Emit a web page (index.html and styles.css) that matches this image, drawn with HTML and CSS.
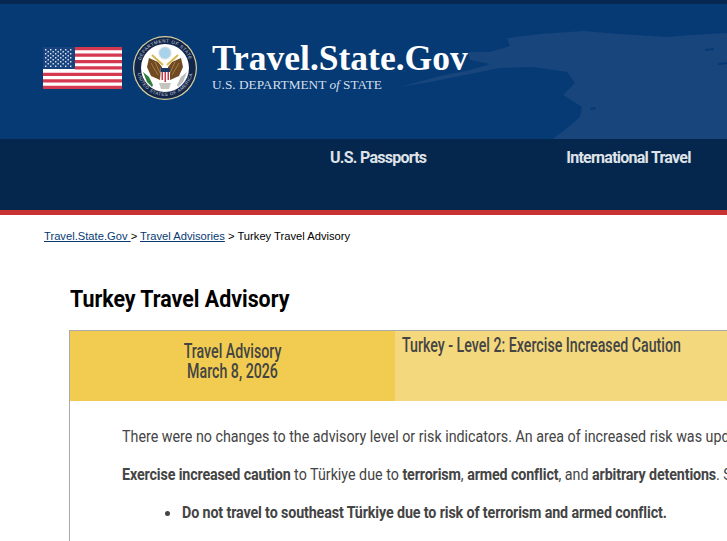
FILE: index.html
```html
<!DOCTYPE html>
<html lang="en">
<head>
    <meta charset="UTF-8">
    <title>Turkey Travel Advisory</title>
    <meta name="viewport" content="width=device-width, initial-scale=1.0">
    <link rel="stylesheet" href="styles.css">
</head>
<body>

<header class="site-header">
    <div class="brand-band">
        <svg class="map-shape" viewBox="427 4 300 135" aria-hidden="true">
            <path d="M507 38 L540 34 L583 31 L620 34 L667 37 L690 35 L727 33 L727 139 L553 139 L567 128 L580 117 L582 107 L563 95 L575 83 L567 72 L533 67 L500 68 L470 74 L430 82 L400 87 L440 76 L470 70 L490 64 L470 60 L468 52 L490 52 L510 46 Z" fill="#17457c"/>
            <path d="M590 108 l5 -1 l1 2 l-5 1 Z M705 49 l9 -1 l0 2 l-9 1 Z M718 63 l9 -1 l0 2 l-9 1 Z" fill="#053a74"/>
        </svg>
        <svg class="flag" viewBox="0 0 79 42" aria-label="U.S. flag">
            <rect width="79" height="42" fill="#fff"/>
            <path d="M32 0h47v3.200H32zM32 6.500h47v3.200H32zM32 13h47v3.200H32zM32 19.300h47v3.200H32zM0 25.800h79v3.200H0zM0 32.300h79v3.200H0zM0 38.800h79V42H0z" fill="#d5394f"/>
            <rect width="32" height="22" fill="#18437e"/>
            <g fill="#dfe6f1">
                <path d="M2 2h1.400v1.400H2zM7 2h1.400v1.400H7zM12 2h1.400v1.400H12zM17 2h1.400v1.400H17zM22 2h1.400v1.400H22zM27 2h1.400v1.400H27z"/>
                <path d="M2 6h1.400v1.400H2zM7 6h1.400v1.400H7zM12 6h1.400v1.400H12zM17 6h1.400v1.400H17zM22 6h1.400v1.400H22zM27 6h1.400v1.400H27z"/>
                <path d="M4.500 4h1.400v1.400H4.500zM9.500 4h1.400v1.400H9.500zM14.500 4h1.400v1.400H14.500zM19.500 4h1.400v1.400H19.500zM24.500 4h1.400v1.400H24.500z"/>
                <path d="M4.500 8h1.400v1.400H4.500zM9.500 8h1.400v1.400H9.500zM14.500 8h1.400v1.400H14.500zM19.500 8h1.400v1.400H19.500zM24.500 8h1.400v1.400H24.500z"/>
                <path d="M2 10h1.400v1.400H2zM7 10h1.400v1.400H7zM12 10h1.400v1.400H12zM17 10h1.400v1.400H17zM22 10h1.400v1.400H22zM27 10h1.400v1.400H27z"/>
                <path d="M4.500 12h1.400v1.400H4.500zM9.500 12h1.400v1.400H9.500zM14.500 12h1.400v1.400H14.500zM19.500 12h1.400v1.400H19.500zM24.500 12h1.400v1.400H24.500z"/>
                <path d="M2 14h1.400v1.400H2zM7 14h1.400v1.400H7zM12 14h1.400v1.400H12zM17 14h1.400v1.400H17zM22 14h1.400v1.400H22zM27 14h1.400v1.400H27z"/>
                <path d="M4.500 16h1.400v1.400H4.500zM9.500 16h1.400v1.400H9.500zM14.500 16h1.400v1.400H14.500zM19.500 16h1.400v1.400H19.500zM24.500 16h1.400v1.400H24.500z"/>
                <path d="M2 18.500h1.400v1.400H2zM7 18.500h1.400v1.400H7zM12 18.500h1.400v1.400H12zM17 18.500h1.400v1.400H17zM22 18.500h1.400v1.400H22zM27 18.500h1.400v1.400H27z"/>
            </g>
        </svg>
        <svg class="seal" viewBox="0 0 64 64" aria-label="Department of State seal">
            <defs>
                <path id="seal-top" d="M6.500 32 A25.500 25.500 0 0 1 57.500 32"/>
                <path id="seal-bottom" d="M4 32 A28 28 0 0 0 60 32"/>
            </defs>
            <circle cx="32" cy="32" r="32" fill="#d8cf9c"/>
            <circle cx="32" cy="32" r="30.800" fill="#12264a"/>
            <text class="seal-ring"><textPath href="#seal-top" startOffset="50%" text-anchor="middle">DEPARTMENT OF STATE</textPath></text>
            <text class="seal-ring"><textPath href="#seal-bottom" startOffset="50%" text-anchor="middle">UNITED STATES OF AMERICA</textPath></text>
            <circle cx="32" cy="32" r="24" fill="#fff"/>
            <circle cx="32" cy="17" r="6" fill="#a9d3ea" stroke="#d8dde0" stroke-width="1.500" stroke-dasharray="1.500 .8"/>
            <path d="M29 31 L25 26 L16 22 L14 31 L18 40 L27 44 Z" fill="#6f4a22"/>
            <path d="M35 31 L39 26 L48 22 L50 31 L46 40 L37 44 Z" fill="#6f4a22"/>
            <path d="M18 27 L25 39 M22 26 L27 37 M46 27 L39 39 M42 26 L37 37" stroke="#a67c46" stroke-width="1"/>
            <path d="M19 19 L30 29 M45 19 L34 29" stroke="#d7b64a" stroke-width="1.800"/>
            <path d="M27.500 32 h9.500 v10 q0 3 -4.750 5 q-4.750 -2 -4.750 -5 Z" fill="#fff"/>
            <path d="M27.500 32 h9.500 v4 h-9.500 Z" fill="#1d3763"/>
            <path d="M28.500 36 h1.500 v8 h-1.500 Z M31.500 36 h1.500 v10 h-1.500 Z M34.500 36 h1.500 v8 h-1.500 Z" fill="#c8384a"/>
            <path d="M10 36 l6 5 l4 8 l-1 2 l-5 -5 Z" fill="#2f7d3d"/>
            <path d="M54 36 l-6 5 l-4 8 l1 2 l5 -5 Z" fill="#b9bcbc"/>
            <path d="M26 47 h12 l-2 6 h-8 Z" fill="#c5c5bf"/>
        </svg>
        <div class="brand-text">
            <div class="brand-title">Travel.State.Gov</div>
            <div class="brand-sub">U.S. DEPARTMENT <i>of</i> STATE</div>
        </div>
    </div>
    <nav class="main-nav">
        <a href="#">U.S. Passports</a>
        <a href="#">International Travel</a>
    </nav>
</header>

<div class="breadcrumb">
    <a href="#">Travel.State.Gov </a> &gt; <a href="#">Travel Advisories</a> &gt; <span class="current">Turkey Travel Advisory</span>
</div>

<main class="content">
    <h1><span>Turkey Travel Advisory</span></h1>

    <section class="advisory">
        <div class="advisory-head">
            <div class="advisory-date">
                <span class="squeeze">Travel Advisory</span>
                <span class="squeeze">March 8, 2026</span>
            </div>
            <div class="advisory-level">
                <span class="squeeze">Turkey - Level 2: Exercise Increased Caution</span>
            </div>
        </div>
        <div class="advisory-body">
            <p>There were no changes to the advisory level or risk indicators. An area of increased risk was updated to reflect the current security situation in the country.</p>
            <p><strong>Exercise increased caution</strong> to Türkiye due to <strong>terrorism</strong>, <strong>armed conflict</strong>, and <strong>arbitrary detentions</strong>. Some areas have increased risk.</p>
            <ul>
                <li><span class="item-text"><strong>Do not travel to southeast Türkiye due to risk of terrorism and armed conflict.</strong></span></li>
            </ul>
        </div>
    </section>
</main>

</body>
</html>
```

FILE: styles.css
```css
html, body {
    margin: 0;
    padding: 0;
    height: 541px;
    overflow: hidden;
}

body {
    background: #fff;
    font-family: Roboto, "Liberation Sans", sans-serif;
    color: #333;
}

.site-header {
    border-top: 4px solid #06274f;
    border-bottom: 5px solid #c93232;
}

.brand-band {
    position: relative;
    display: flex;
    align-items: flex-start;
    height: 135px;
    padding-left: 43px;
    box-sizing: border-box;
    background: #053a74;
    overflow: hidden;
}

.map-shape {
    position: absolute;
    right: 0;
    top: 0;
    width: 300px;
    height: 135px;
    overflow: visible;
}

.flag {
    position: relative;
    flex: none;
    width: 79px;
    height: 42px;
    margin-top: 43px;
}

.seal {
    position: relative;
    flex: none;
    width: 64px;
    height: 64px;
    margin-left: 11px;
    margin-top: 32px;
}

.seal-ring {
    font-family: "Liberation Sans", sans-serif;
    font-size: 4.6px;
    letter-spacing: 0.5px;
    fill: #c6ccd8;
}

.brand-text {
    position: relative;
    margin-left: 15px;
    margin-top: 35px;
    color: #fff;
    font-family: "Liberation Serif", serif;
}

.brand-title {
    font-size: 35.5px;
    font-weight: bold;
    line-height: 38px;
    white-space: nowrap;
}

.brand-sub {
    font-size: 13.3px;
    line-height: 16px;
    color: #d5deea;
    white-space: nowrap;
}

.main-nav {
    display: flex;
    gap: 140px;
    height: 71px;
    padding: 9px 0 0 330px;
    box-sizing: border-box;
    background: #06274d;
}

.main-nav a {
    color: #dfe3e8;
    font-size: 16px;
    font-weight: bold;
    line-height: 20px;
    letter-spacing: -0.75px;
    text-decoration: none;
    white-space: nowrap;
}

.breadcrumb {
    padding: 14px 0 0 44px;
    font-family: "Liberation Sans", Arial, sans-serif;
    font-size: 11.2px;
    line-height: 14px;
    color: #000;
}

.breadcrumb a {
    color: #053a74;
}

.content {
    padding: 42px 0 0 69px;
}

h1 {
    margin: 0 0 17px 1px;
    font-size: 24px;
    line-height: 28px;
    color: #000;
}

h1 span {
    display: inline-block;
    transform: scaleX(0.89);
    transform-origin: left;
    white-space: nowrap;
}

.advisory {
    width: 1000px;
    border: 1px solid #aaa;
    border-bottom: none;
}

.advisory-head {
    display: flex;
    height: 70px;
    font-size: 20px;
    font-weight: 500;
    line-height: 20px;
    color: #444;
}

.squeeze {
    display: block;
    white-space: nowrap;
    transform: scaleX(0.71);
}

.advisory-date {
    width: 325px;
    padding-top: 10px;
    box-sizing: border-box;
    background: #f1cc50;
    text-align: center;
}

.advisory-level {
    flex: 1;
    padding: 4px 0 0 7px;
    background: #f3d87e;
}

.advisory-level .squeeze {
    transform-origin: left;
}

.advisory-body {
    padding: 24px 52px 18px;
    font-size: 17px;
    line-height: 22px;
    color: #444;
    white-space: nowrap;
}

.advisory-body p {
    margin: 0 0 16px;
    transform: scaleX(0.84);
    transform-origin: left;
}

.advisory-body strong {
    font-weight: 700;
    letter-spacing: -0.15px;
}

.advisory-body ul {
    margin: 0;
    padding-left: 60px;
}

.item-text {
    display: inline-block;
    transform: scaleX(0.84);
    transform-origin: left;
}
```
